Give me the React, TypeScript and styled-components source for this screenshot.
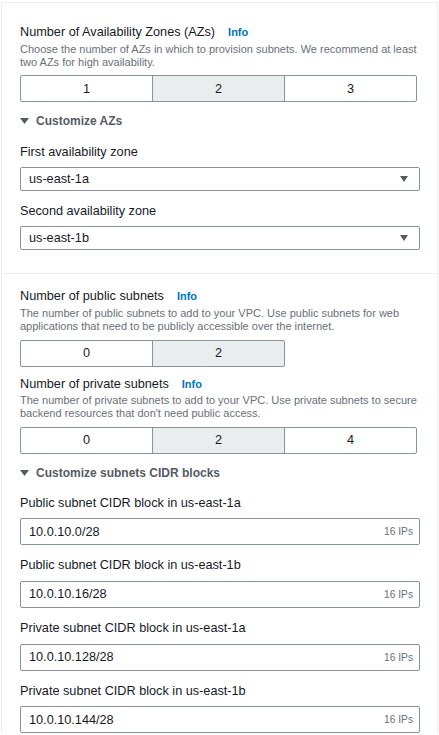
import React from "react";
import styled, { createGlobalStyle } from "styled-components";

const GlobalStyle = createGlobalStyle`
  html, body { margin: 0; padding: 0; background: #ffffff; }
  body { font-family: "Liberation Sans", Arial, sans-serif; color: #16191f; }
  * { box-sizing: border-box; }
`;

const Page = styled.div`
  padding: 2px 0 0 1px;
  width: 439px;
`;

const Card = styled.div`
  width: 437px;
  border: 1px solid #eaeded;
  border-bottom: none;
`;

const Section = styled.section<{ $top: number; $bottom: number; $divider?: boolean }>`
  display: flex;
  flex-direction: column;
  padding: ${(p) => p.$top}px 0 ${(p) => p.$bottom}px 18px;
  border-top: ${(p) => (p.$divider ? "1px solid #eaeded" : "none")};
`;

const LabelRow = styled.div<{ $mt?: number }>`
  display: flex;
  align-items: baseline;
  gap: 13px;
  margin-top: ${(p) => p.$mt ?? 0}px;
  height: 18px;
  line-height: 18px;
  font-size: 12.7px;
  color: #16191f;
`;

const Info = styled.span`
  font-size: 11px;
  font-weight: 700;
  color: #0073bb;
`;

const Description = styled.div`
  margin-top: 1.5px;
  font-size: 11px;
  line-height: 13px;
  color: #687078;
  width: 400px;
`;

const SegmentGroup = styled.div<{ $mt?: number }>`
  display: flex;
  margin-top: ${(p) => p.$mt ?? 6.5}px;
`;

const Segment = styled.div<{ $selected?: boolean }>`
  width: 133px;
  height: 27px;
  display: flex;
  align-items: center;
  justify-content: center;
  font-size: 12.7px;
  color: #16191f;
  border: 1px solid #879596;
  background: ${(p) => (p.$selected ? "#eaeded" : "#ffffff")};
  & + & { margin-left: -1px; }
  &:first-child { border-radius: 2px 0 0 2px; }
  &:last-child { border-radius: 0 2px 2px 0; }
`;

const Expander = styled.div<{ $mt?: number }>`
  display: flex;
  align-items: center;
  gap: 7px;
  margin-top: ${(p) => p.$mt ?? 10}px;
  height: 18px;
  font-size: 12px;
  font-weight: 700;
  color: #545b64;
`;

const Select = styled.div<{ $mt?: number }>`
  display: flex;
  align-items: center;
  justify-content: space-between;
  width: 400px;
  height: 24px;
  margin-top: ${(p) => p.$mt ?? 6.5}px;
  padding: 0 11px 0 8px;
  border: 1px solid #879596;
  border-radius: 2px;
  font-size: 12.7px;
  color: #16191f;
`;

const Input = styled.div<{ $mt?: number }>`
  display: flex;
  align-items: center;
  justify-content: space-between;
  width: 400px;
  height: 27px;
  margin-top: ${(p) => p.$mt ?? 6.5}px;
  padding: 0 6px 0 8px;
  border: 1px solid #879596;
  border-radius: 2px;
  font-size: 12.7px;
  color: #16191f;
`;

const Suffix = styled.span`
  font-size: 10.2px;
  color: #687078;
`;

const Caret = ({ w, h }: { w: number; h: number }) => (
  <svg width={w} height={h} viewBox={`0 0 ${w} ${h}`} aria-hidden>
    <polygon points={`0,0 ${w},0 ${w / 2},${h}`} fill="#545b64" />
  </svg>
);

const Label = ({ text, info, mt }: { text: string; info?: boolean; mt?: number }) => (
  <LabelRow $mt={mt}>
    <span>{text}</span>
    {info && <Info>Info</Info>}
  </LabelRow>
);

const Segments = ({ items, selected, mt }: { items: string[]; selected: string; mt?: number }) => (
  <SegmentGroup $mt={mt}>
    {items.map((it) => (
      <Segment key={it} $selected={it === selected}>
        {it}
      </Segment>
    ))}
  </SegmentGroup>
);

const cidrs = [
  { label: "Public subnet CIDR block in us-east-1a", value: "10.0.10.0/28" },
  { label: "Public subnet CIDR block in us-east-1b", value: "10.0.10.16/28" },
  { label: "Private subnet CIDR block in us-east-1a", value: "10.0.10.128/28" },
  { label: "Private subnet CIDR block in us-east-1b", value: "10.0.10.144/28" },
];

export default function App() {
  return (
    <>
      <GlobalStyle />
      <Page>
        <Card>
          <Section $top={20} $bottom={23}>
            <Label text="Number of Availability Zones (AZs)" info />
            <Description>
              Choose the number of AZs in which to provision subnets. We recommend at least two AZs for high
              availability.
            </Description>
            <Segments items={["1", "2", "3"]} selected="2" mt={6.5} />
            <Expander $mt={10}>
              <Caret w={9} h={6} />
              <span>Customize AZs</span>
            </Expander>
            <Label text="First availability zone" mt={12.5} />
            <Select $mt={6}>
              <span>us-east-1a</span>
              <Caret w={8} h={6} />
            </Select>
            <Label text="Second availability zone" mt={11} />
            <Select $mt={6.5}>
              <span>us-east-1b</span>
              <Caret w={8} h={6} />
            </Select>
          </Section>
          <Section $top={13} $bottom={0} $divider>
            <Label text="Number of public subnets" info />
            <Description>
              The number of public subnets to add to your VPC. Use public subnets for web applications that need to
              be publicly accessible over the internet.
            </Description>
            <Segments items={["0", "2"]} selected="2" mt={7} />
            <Label text="Number of private subnets" info mt={8} />
            <Description>
              The number of private subnets to add to your VPC. Use private subnets to secure backend resources that
              don't need public access.
            </Description>
            <Segments items={["0", "2", "4"]} selected="2" mt={6.5} />
            <Expander $mt={10}>
              <Caret w={9} h={6} />
              <span>Customize subnets CIDR blocks</span>
            </Expander>
            {cidrs.map((c, i) => (
              <React.Fragment key={c.label}>
                <Label text={c.label} mt={i === 0 ? 12 : 11.3} />
                <Input>
                  <span>{c.value}</span>
                  <Suffix>16 IPs</Suffix>
                </Input>
              </React.Fragment>
            ))}
          </Section>
        </Card>
      </Page>
    </>
  );
}
